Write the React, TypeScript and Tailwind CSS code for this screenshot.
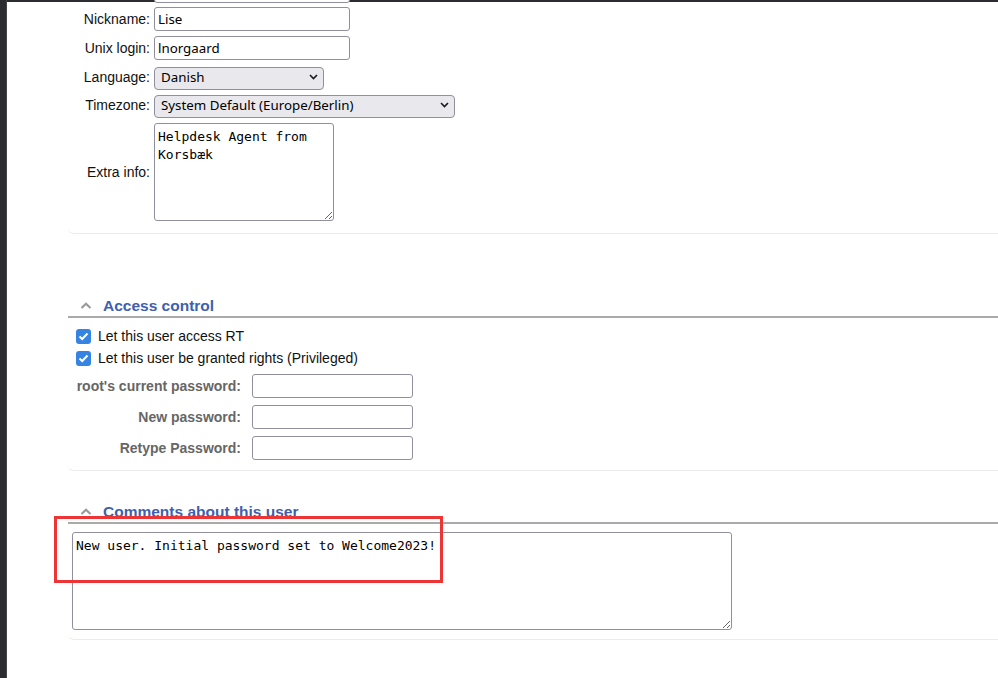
import React from "react";

const inputCls =
  "h-[24px] border border-[#8f8f9d] rounded-[3px] bg-white px-[3px] text-[13.33px] text-black font-['Noto_Sans',sans-serif] outline-none";

function Select({ value, width }: { value: string; width: string }) {
  return (
    <div className={`relative h-[23px] ${width}`}>
      <select
        defaultValue={value}
        className="appearance-none w-full h-full border border-[#8f8f9d] rounded-[4px] bg-[#e9e9ed] pl-[6px] pr-[20px] text-[13.33px] text-black font-['Noto_Sans',sans-serif] outline-none"
      >
        <option>{value}</option>
      </select>
      <svg
        className="absolute right-[6px] top-[9px] pointer-events-none"
        width="9"
        height="6"
        viewBox="0 0 9 6"
      >
        <path d="M1 1 L4.5 4.5 L8 1" fill="none" stroke="#1a1a1a" strokeWidth="1.6" />
      </svg>
    </div>
  );
}

function Row({
  label,
  children,
  className = "",
}: {
  label: string;
  children: React.ReactNode;
  className?: string;
}) {
  return (
    <div className={`flex items-center ${className}`}>
      <div className="w-[82px] text-right text-[14px] text-[#111] leading-[16px]">{label}</div>
      <div className="ml-[4px]">{children}</div>
    </div>
  );
}

function SectionHeader({ title, className = "" }: { title: string; className?: string }) {
  return (
    <div className={`flex border-b-2 border-[#aaaaaa] pb-[1px] pl-[12px] ${className}`}>
      <svg className="mt-[5px]" width="12" height="7" viewBox="0 0 12 7">
        <path d="M1.5 6 L6 1.8 L10.5 6" fill="none" stroke="#9a9a9a" strokeWidth="2.2" />
      </svg>
      <span className="ml-[11px] text-[15.5px] leading-[18px] font-bold text-[#3f5fae]">{title}</span>
    </div>
  );
}

function Check({ label }: { label: string }) {
  return (
    <div className="flex items-center h-[22px] pl-[8px]">
      <div className="w-[15px] h-[15px] rounded-[3px] bg-[#3584e4] flex items-center justify-center">
        <svg width="11" height="9" viewBox="0 0 11 9">
          <path d="M1.5 4.5 L4.2 7 L9.5 1.5" fill="none" stroke="white" strokeWidth="2" />
        </svg>
      </div>
      <span className="ml-[7px] text-[14px] text-[#111]">{label}</span>
    </div>
  );
}

function PwRow({ label, className = "" }: { label: string; className?: string }) {
  return (
    <div className={`flex items-center ${className}`}>
      <div className="w-[173px] text-right text-[14px] font-bold text-[#666666]">{label}</div>
      <input type="password" className={`${inputCls} ml-[11px] w-[161px]`} />
    </div>
  );
}

export default function App() {
  return (
    <div className="relative w-[998px] h-[678px] overflow-hidden bg-white flex font-['Liberation_Sans',Arial,sans-serif]">
      <div className="w-[7px] shrink-0 bg-[#2c2d31] border-r border-[#45464a]" />
      <div className="flex-1 flex flex-col overflow-hidden">
        <div className="h-[2px] bg-[#2c2d31] shrink-0" />
        <div className="pl-[61px]">
          {/* Section 1 */}
          <div className="border-b border-[#ececec] rounded-bl-[6px] pb-[12px]">
            <Row label="" className="mt-[-23px]">
              <input className={`${inputCls} w-[196px]`} defaultValue="" />
            </Row>
            <Row label="Nickname:" className="mt-[4px]">
              <input className={`${inputCls} w-[196px]`} defaultValue="Lise" />
            </Row>
            <Row label="Unix login:" className="mt-[5px]">
              <input className={`${inputCls} w-[196px]`} defaultValue="lnorgaard" />
            </Row>
            <Row label="Language:" className="mt-[5px]">
              <Select value="Danish" width="w-[170px]" />
            </Row>
            <Row label="Timezone:" className="mt-[5px]">
              <Select value="System Default (Europe/Berlin)" width="w-[301px]" />
            </Row>
            <Row label="Extra info:" className="mt-[7px]">
              <textarea
                className="block w-[180px] h-[98px] border border-[#8f8f9d] rounded-[3px] px-[3px] pt-[4px] text-[13px] leading-[17.5px] text-black font-['DejaVu_Sans_Mono',monospace] outline-none"
                defaultValue={"Helpdesk Agent from Korsbæk"}
              />
            </Row>
          </div>

          {/* Access control */}
          <div className="mt-[63px] border-b border-[#ececec] rounded-bl-[6px] pb-[10px]">
            <SectionHeader title="Access control" />
            <div className="mt-[7px]">
              <Check label="Let this user access RT" />
              <Check label="Let this user be granted rights (Privileged)" />
            </div>
            <PwRow label="root's current password:" className="mt-[5px]" />
            <PwRow label="New password:" className="mt-[7px]" />
            <PwRow label="Retype Password:" className="mt-[7px]" />
          </div>

          {/* Comments */}
          <div className="mt-[32px] border-b border-[#ececec] rounded-bl-[6px] pb-[9px]">
            <SectionHeader title="Comments about this user" />
            <textarea
              className="block mt-[8px] ml-[4px] w-[660px] h-[98px] border border-[#8f8f9d] rounded-[3px] px-[3px] pt-[4px] text-[13px] leading-[17.5px] text-black font-['DejaVu_Sans_Mono',monospace] outline-none"
              defaultValue="New user. Initial password set to Welcome2023!"
            />
          </div>
        </div>
      </div>
      <div className="absolute left-[54px] top-[516px] w-[389px] h-[67px] border-[3px] border-[#ee3535] pointer-events-none" />
    </div>
  );
}
